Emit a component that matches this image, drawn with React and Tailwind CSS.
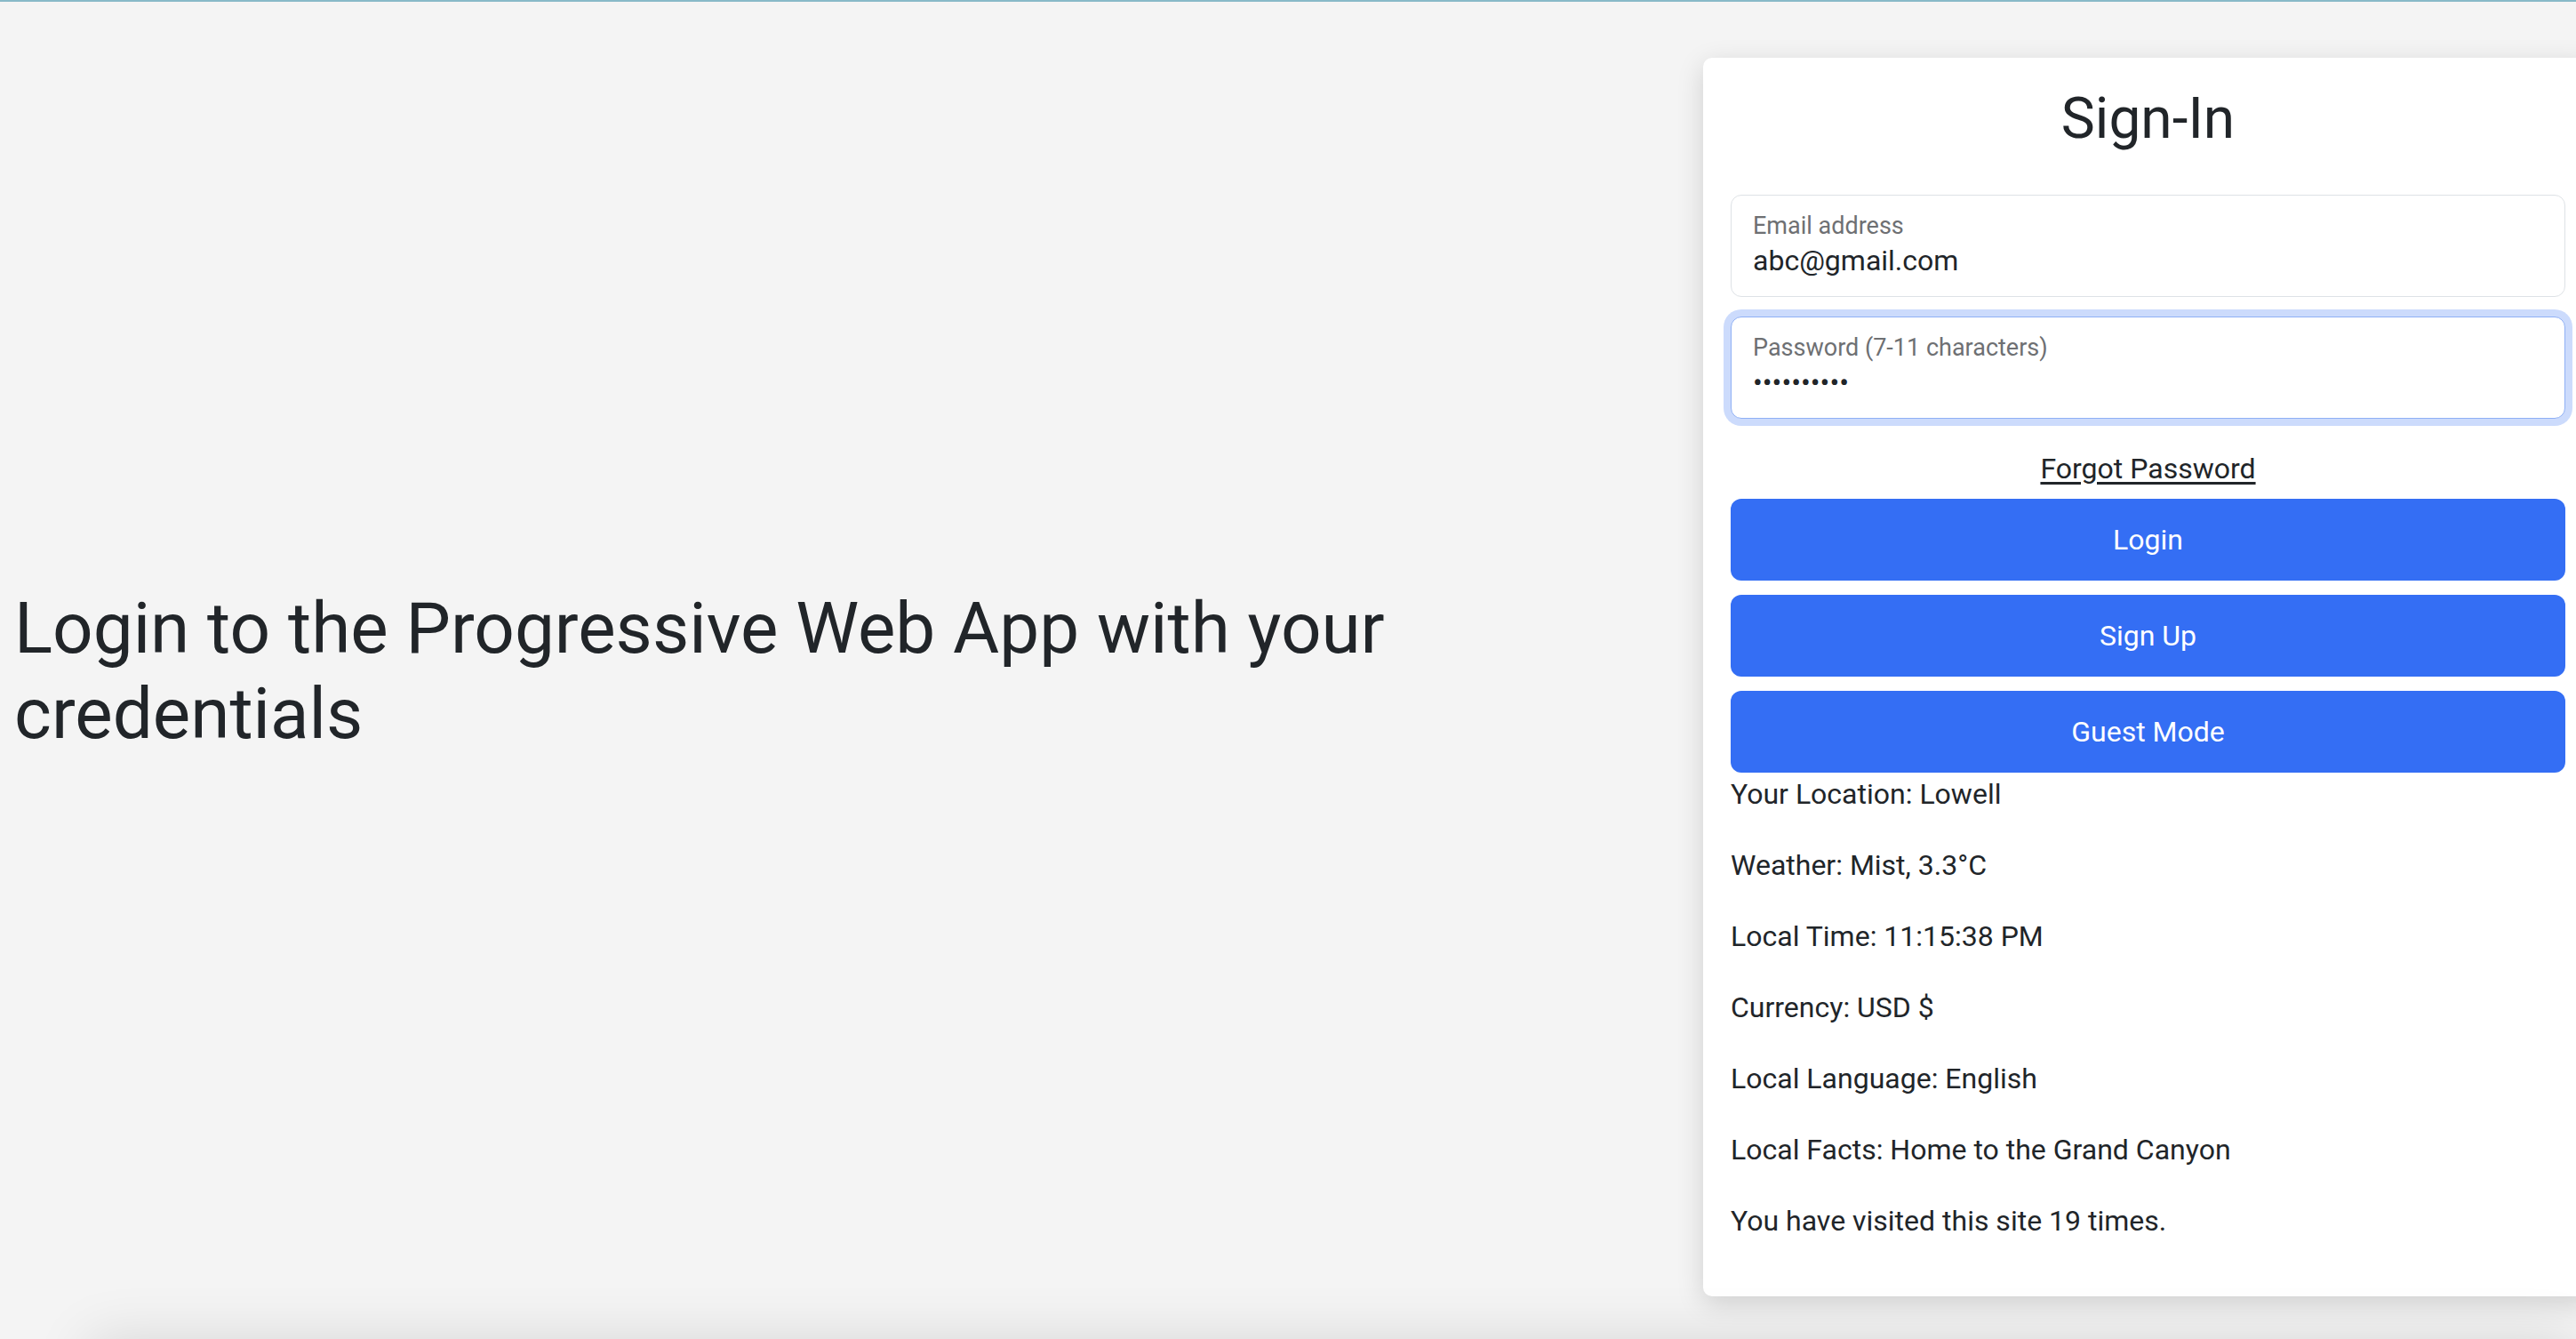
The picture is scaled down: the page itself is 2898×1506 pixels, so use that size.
import React from "react";

const facts = [
    "Your Location: Lowell",
    "Weather: Mist, 3.3°C",
    "Local Time: 11:15:38 PM",
    "Currency: USD $",
    "Local Language: English",
    "Local Facts: Home to the Grand Canyon",
    "You have visited this site 19 times.",
];

function FloatingField({ label, value, focused }) {
    return (
        <div
            className={
                "flex h-[115px] flex-col rounded-[12px] border bg-white px-[24px] pt-[21px] " +
                (focused
                    ? "border-[#8fb0f5] shadow-[0_0_0_8px_#ccdbfc]"
                    : "border-[#dee2e6]")
            }
        >
            <span className="text-[27px] leading-[27px] text-[#6e7073]">{label}</span>
            <span className="mt-[5px] text-[32px] leading-[40px] text-[#212529]">{value}</span>
        </div>
    );
}

export default function App() {
    return (
        <div className="relative flex h-[1506px] flex-col overflow-hidden bg-[#f4f4f4] font-['Roboto',sans-serif] text-[#212529]">
            {/* top accent line */}
            <div className="h-[2px] shrink-0 bg-[#88b9c8]" />

            <main className="flex shrink-0 items-center pt-[63px]">
                {/* Left: intro text */}
                <div className="w-[1916px] shrink-0 pl-[16px]">
                    <h1 className="mb-[14px] text-[80px] font-normal leading-[96px]">
                        Login to the Progressive Web App with your credentials
                    </h1>
                </div>

                {/* Right: sign-in card */}
                <div className="w-[1001px] shrink-0 rounded-[10px] bg-white px-[31px] pt-[30px] pb-[29px] shadow-[0_8px_30px_rgba(0,0,0,0.15)]">
                    <h2 className="mb-[47px] text-center text-[64px] font-normal leading-[77px]">Sign-In</h2>

                    <FloatingField label="Email address" value="abc@gmail.com" />
                    <div className="mt-[22px]">
                        <FloatingField label="Password (7-11 characters)" value="••••••••••" focused />
                    </div>

                    <div className="mt-[32px] text-center text-[32px] leading-[48px]">
                        <a href="#" className="text-[#212529] underline underline-offset-[4px]">
                            Forgot Password
                        </a>
                    </div>

                    <div className="mt-[10px] flex flex-col gap-[16px]">
                        {["Login", "Sign Up", "Guest Mode"].map((t) => (
                            <button
                                key={t}
                                type="button"
                                className="flex h-[92px] w-full items-center justify-center rounded-[12px] bg-[#346ef4] text-[32px] leading-[48px] text-white"
                            >
                                {t}
                            </button>
                        ))}
                    </div>

                    <div>
                        {facts.map((f) => (
                            <p key={f} className="mb-[32px] text-[32px] leading-[48px]">
                                {f}
                            </p>
                        ))}
                    </div>
                </div>
            </main>

            {/* footer below the fold, only its shadow shows */}
            <footer className="ml-[100px] mt-[48px] h-[200px] shrink-0 bg-[#f4f4f4] shadow-[0_0_60px_rgba(0,0,0,0.12)]" />
        </div>
    );
}
